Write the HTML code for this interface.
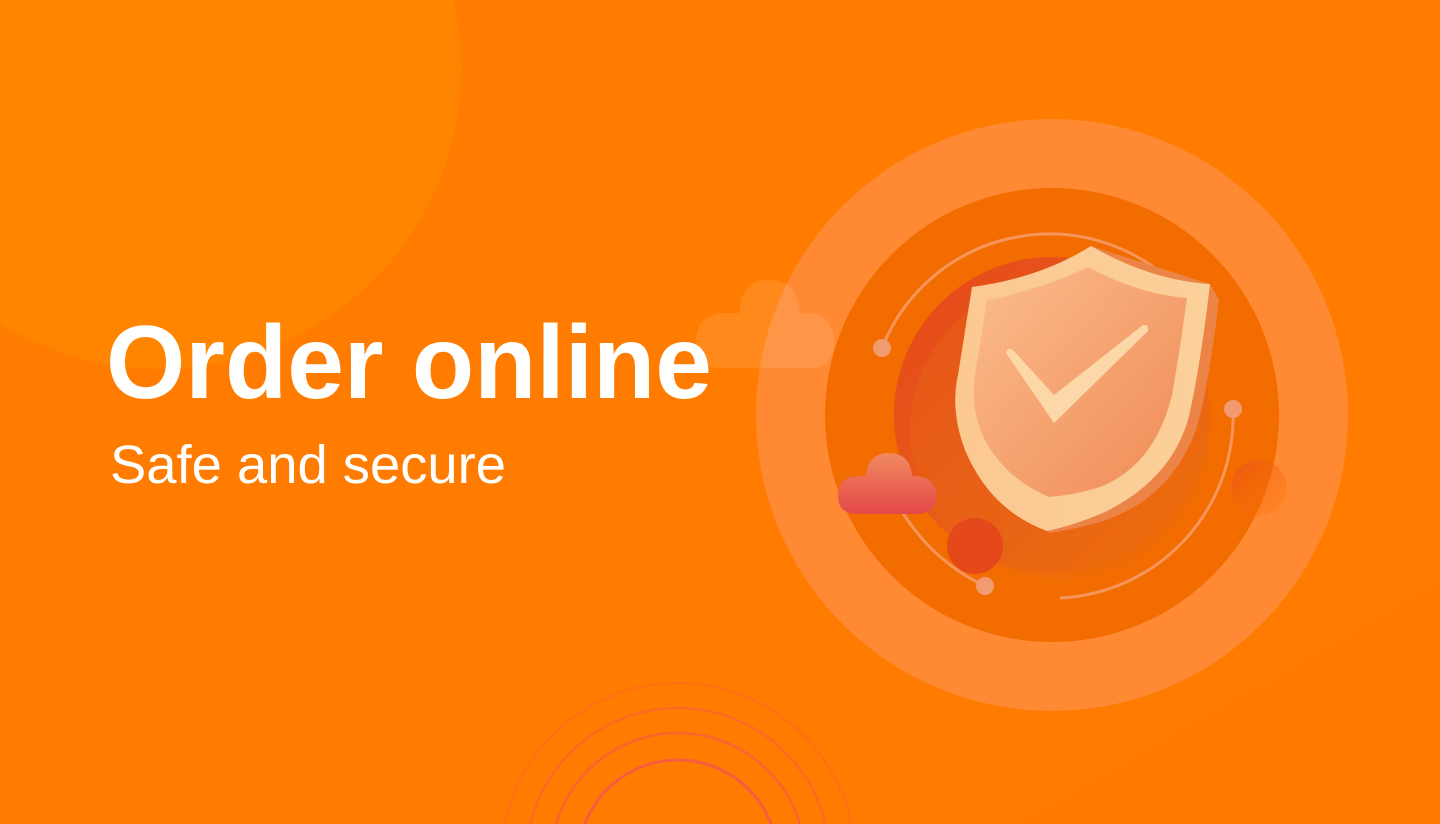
<!DOCTYPE html>
<html><head><meta charset="utf-8"><style>
html,body{margin:0;padding:0;width:1440px;height:824px;overflow:hidden;background:#ff7a00}
svg{position:absolute;left:0;top:0;display:block}
</style></head><body>
<svg width="1440" height="824" viewBox="0 0 1440 824" xmlns="http://www.w3.org/2000/svg">
<defs>
<linearGradient id="bg" x1="0" y1="0" x2="1" y2="1"><stop offset="0" stop-color="#ff7d00"/><stop offset="1" stop-color="#ff7b00"/></linearGradient>
<linearGradient id="redc" x1="0" y1="0" x2="1" y2="1"><stop offset="0" stop-color="#e5461a"/><stop offset="0.6" stop-color="#e8601a"/><stop offset="1" stop-color="#f07010" stop-opacity="0.3"/></linearGradient>
<linearGradient id="sh" x1="0" y1="0" x2="1" y2="1"><stop offset="0" stop-color="#fbbd8c"/><stop offset="1" stop-color="#ef8a55"/></linearGradient>
<linearGradient id="rim" x1="0" y1="0" x2="1" y2="0"><stop offset="0" stop-color="#fbc890"/><stop offset="1" stop-color="#fbd09a"/></linearGradient>
<linearGradient id="cl" x1="0" y1="0" x2="0" y2="1"><stop offset="0" stop-color="#f08a60"/><stop offset="1" stop-color="#e44848"/></linearGradient>
<linearGradient id="bub" x1="0" y1="0" x2="1" y2="1"><stop offset="0" stop-color="#e9501f"/><stop offset="1" stop-color="#ff7a00" stop-opacity="0.3"/></linearGradient>
</defs>
<rect width="1440" height="824" fill="url(#bg)"/>
<circle cx="160" cy="68" r="301" fill="#ff8500"/>
<g fill="none" stroke="#f5505a">
<circle cx="678" cy="860" r="177" stroke-width="2" stroke-opacity="0.25"/>
<circle cx="678" cy="860" r="152" stroke-width="2.5" stroke-opacity="0.4"/>
<circle cx="678" cy="860" r="127" stroke-width="2.5" stroke-opacity="0.55"/>
<circle cx="678" cy="860" r="100" stroke-width="3" stroke-opacity="0.7"/>
</g>
<circle cx="1052" cy="415" r="296" fill="#ff8a33"/>
<circle cx="1052" cy="415" r="227" fill="#f26c00"/>
<circle cx="1052" cy="415" r="158" fill="url(#redc)"/>
<circle cx="1060" cy="430" r="150" fill="#e96a10" fill-opacity="0.35"/>
<g fill="#ffffff" fill-opacity="0.1">
<path d="M720 368 Q696 368 696 343 Q696 314 725 313 L740 313 Q740 280 768 280 Q798 280 800 313 L808 313 Q834 315 834 343 Q834 368 810 368 Z"/>
</g>
<path d="M882 348 A180 180 0 0 1 1175 285" fill="none" stroke="#f8a070" stroke-width="3" stroke-opacity="0.8"/>
<path d="M1233 410 A182 182 0 0 1 1060 598" fill="none" stroke="#f8a070" stroke-width="3" stroke-opacity="0.8"/>
<path d="M898 505 Q930 560 985 586" fill="none" stroke="#f8a070" stroke-width="3" stroke-opacity="0.8"/>
<circle cx="882" cy="348" r="9" fill="#f29a70"/>
<circle cx="1233" cy="409" r="9" fill="#f29a70"/>
<circle cx="985" cy="586" r="9" fill="#f29a70"/>
<circle cx="1259" cy="488" r="28" fill="url(#bub)" fill-opacity="0.7"/>
<circle cx="975" cy="546" r="28" fill="#e4461c" fill-opacity="0.9"/>
<path d="M1091 246 Q1150 280 1210 284 L1219 300 Q1208 390 1196 430 Q1170 500 1100 522 Q1075 529 1050 533 L1047 531 Q1150 500 1188 420 Q1200 370 1210 284 Z" fill="#ec8448"/>
<path d="M1091 246 Q1150 280 1210 284 Q1200 370 1188 420 Q1170 480 1105 512 Q1075 525 1047 531 Q990 510 965 450 Q950 410 958 375 L972 287 Q1040 278 1091 246 Z" fill="url(#rim)"/>
<path d="M1088 267 Q1138 294 1187 298 Q1180 350 1172 395 Q1155 465 1100 487 Q1075 495 1049 497 Q1005 478 985 440 Q970 410 975 375 L987 300 Q1040 290 1088 267 Z" fill="url(#sh)"/>
<path d="M1006 353 Q1007 347 1013 350 L1054 395 L1143 325 Q1149 324 1148 331 L1054 423 Z" fill="#fcd8a8"/>
<path d="M858 514 Q838 514 838 496 Q838 477 858 476 L866 476 Q868 453 889 453 Q910 453 912 476 Q936 476 936 496 Q936 514 916 514 Z" fill="url(#cl)"/>
<text x="106" y="398" font-family="Liberation Sans, sans-serif" font-weight="700" font-size="104" fill="#fff" textLength="606" lengthAdjust="spacingAndGlyphs">Order online</text>
<text x="110" y="483" font-family="Liberation Sans, sans-serif" font-size="54" fill="#fff" textLength="396" lengthAdjust="spacingAndGlyphs">Safe and secure</text>
</svg>
</body></html>
